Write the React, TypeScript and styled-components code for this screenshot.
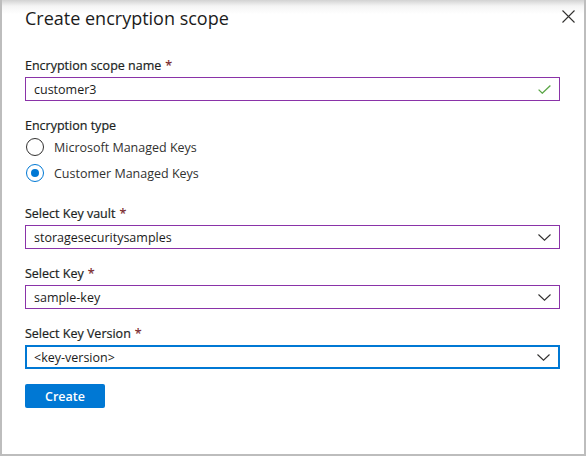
import React from "react";
import styled, { createGlobalStyle } from "styled-components";

const Global = createGlobalStyle`
  html, body { margin: 0; padding: 0; background: #ffffff; }
  * { box-sizing: border-box; }
  body { font-family: "Open Sans", "Noto Sans", "Liberation Sans", sans-serif; }
`;

const Dialog = styled.div`
  width: 586px;
  height: 456px;
  background: linear-gradient(to bottom, #d2d2d2 0px, #f4f4f4 6px, #ffffff 14px);
  border-left: 2px solid #bdbdbd;
  border-right: 2px solid #bdbdbd;
  border-bottom: 2px solid #bdbdbd;
  display: flex;
  flex-direction: column;
`;

const Header = styled.div`
  display: flex;
  align-items: flex-start;
  justify-content: space-between;
  padding: 4px 8px 0 23px;
  height: 44px;
`;

const Title = styled.h1`
  margin: 0;
  font-size: 18px;
  line-height: 28px;
  font-weight: 400;
  color: #1b1b1b;
`;

const Close = styled.button`
  border: 0;
  background: transparent;
  padding: 0;
  margin-top: 6px;
  width: 14px;
  height: 14px;
  display: flex;
  color: #323130;
`;

const Body = styled.div`
  display: flex;
  flex-direction: column;
  padding: 0 24px 0 23px;
`;

const Field = styled.div<{ $first?: boolean }>`
  display: flex;
  flex-direction: column;
  gap: 2px;
  margin-top: ${(p) => (p.$first ? "13px" : "16px")};
`;

const Label = styled.label`
  font-size: 12.5px;
  line-height: 18px;
  font-weight: 400;
  color: #201f1e;
  -webkit-text-stroke: 0.2px #201f1e;
`;

const Star = styled.span`
  color: #a4262c;
  margin-left: 4px;
`;

const Box = styled.div<{ $tone: "purple" | "blue" }>`
  height: 24px;
  display: flex;
  align-items: center;
  justify-content: space-between;
  padding: 0 8px 0 8px;
  border: ${(p) => (p.$tone === "blue" ? "2px solid #0078d4" : "1px solid #8a33a8")};
  padding-left: ${(p) => (p.$tone === "blue" ? "7px" : "8px")};
  font-size: 12.5px;
  color: #1b1b1b;
  background: #fff;
`;

const TypeGroup = styled.div`
  display: flex;
  flex-direction: column;
  margin-top: 16px;
  margin-bottom: 3px;
`;

const TypeLabel = styled.div`
  font-size: 12.5px;
  line-height: 17px;
  color: #201f1e;
  -webkit-text-stroke: 0.2px #201f1e;
`;

const RadioRow = styled.div`
  height: 26px;
  display: flex;
  align-items: center;
  gap: 10px;
  padding-left: 1px;
  font-size: 12.5px;
  color: #323130;
`;

const Circle = styled.span<{ $checked?: boolean }>`
  width: 18px;
  height: 18px;
  border-radius: 50%;
  border: 1px solid ${(p) => (p.$checked ? "#0078d4" : "#323130")};
  display: flex;
  align-items: center;
  justify-content: center;
  &::after {
    content: "";
    width: 8px;
    height: 8px;
    border-radius: 50%;
    background: ${(p) => (p.$checked ? "#0078d4" : "transparent")};
  }
`;

const Button = styled.button`
  margin-top: 15px;
  width: 80px;
  height: 24px;
  border: 0;
  border-radius: 2px;
  background: #0078d4;
  color: #ffffff;
  font-family: inherit;
  font-size: 12.5px;
  font-weight: 600;
  padding: 0;
`;

const Chevron = () => (
  <svg width="13" height="7" viewBox="0 0 13 7" fill="none">
    <path d="M0.5 0.5 L6.5 6.2 L12.5 0.5" stroke="#323130" strokeWidth="1.1" />
  </svg>
);

const Check = () => (
  <svg width="13" height="9" viewBox="0 0 13 9" fill="none">
    <path d="M0.6 4.6 L4.3 8.2 L12.4 0.5" stroke="#5aa646" strokeWidth="1.3" />
  </svg>
);

const SelectField = ({ label, value, tone }: { label: string; value: string; tone: "purple" | "blue" }) => (
  <Field>
    <Label>
      {label}
      <Star>*</Star>
    </Label>
    <Box $tone={tone}>
      <span>{value}</span>
      <Chevron />
    </Box>
  </Field>
);

export default function App() {
  return (
    <>
      <Global />
      <Dialog>
        <Header>
          <Title>Create encryption scope</Title>
          <Close aria-label="Close">
            <svg width="13" height="13" viewBox="0 0 13 13" fill="none">
              <path d="M0.5 0.5 L12.5 12.5 M12.5 0.5 L0.5 12.5" stroke="#323130" strokeWidth="1.1" />
            </svg>
          </Close>
        </Header>
        <Body>
          <Field $first>
            <Label>
              Encryption scope name<Star>*</Star>
            </Label>
            <Box $tone="purple">
              <span>customer3</span>
              <Check />
            </Box>
          </Field>
          <TypeGroup>
            <TypeLabel>Encryption type</TypeLabel>
            <RadioRow>
              <Circle />
              Microsoft Managed Keys
            </RadioRow>
            <RadioRow>
              <Circle $checked />
              Customer Managed Keys
            </RadioRow>
          </TypeGroup>
          <SelectField label="Select Key vault" value="storagesecuritysamples" tone="purple" />
          <SelectField label="Select Key" value="sample-key" tone="purple" />
          <SelectField label="Select Key Version" value="<key-version>" tone="blue" />
          <Button>Create</Button>
        </Body>
      </Dialog>
    </>
  );
}
